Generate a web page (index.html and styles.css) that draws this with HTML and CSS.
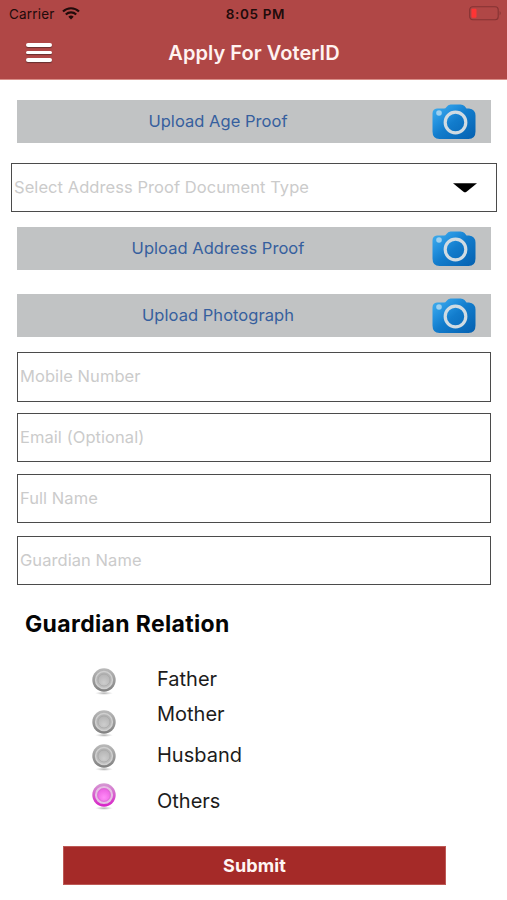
FILE: index.html
```html
<!DOCTYPE html>
<html lang="en">
<head>
<meta charset="utf-8">
<title>Apply For VoterID</title>
<link rel="stylesheet" href="styles.css">
</head>
<body>
<svg class="defs" width="0" height="0" aria-hidden="true">
  <defs>
    <linearGradient id="cam" x1="0" y1="0" x2="1" y2="1">
      <stop offset="0" stop-color="#45b2ef"/><stop offset=".3" stop-color="#2492df"/>
      <stop offset=".5" stop-color="#127ccc"/><stop offset="1" stop-color="#0560b0"/>
    </linearGradient>
    <linearGradient id="grayRim" x1="0" y1="0" x2="0" y2="1">
      <stop offset="0" stop-color="#bababa"/><stop offset="1" stop-color="#808080"/>
    </linearGradient>
    <radialGradient id="grayDot" cy=".65"><stop offset="0" stop-color="#cdcdcd"/><stop offset="1" stop-color="#b4b4b4"/></radialGradient>
    <linearGradient id="pinkRim" x1="0" y1="0" x2="0" y2="1">
      <stop offset="0" stop-color="#d59bd3"/><stop offset="1" stop-color="#d820c7"/>
    </linearGradient>
    <radialGradient id="pinkDot" cy=".65"><stop offset="0" stop-color="#ff8cf7"/><stop offset="1" stop-color="#ee62e4"/></radialGradient>
    <radialGradient id="shade"><stop offset="0" stop-color="#999" stop-opacity=".8"/><stop offset="1" stop-color="#bbb" stop-opacity="0"/></radialGradient>
    <symbol id="camera" viewBox="0 0 44 36">
      <path d="M5 4.500h7q1.500 0 2.500-1.500Q16 .5 18.500.5h10q2.500 0 4 1.500l2 2.500h2.500q6.500 1 6.500 7v16q0 7.500-7 7.500H7.500q-7 0-7-7.500V9.500q0-4.500 4.500-5Z" fill="url(#cam)"/>
      <circle cx="7" cy="9" r="2.800" fill="#9ed0ef"/>
      <circle cx="23.500" cy="18.500" r="10.300" fill="none" stroke="#d0dbe2" stroke-width="3.200"/>
    </symbol>
    <symbol id="off" viewBox="0 0 26 30">
      <ellipse cx="13" cy="26.200" rx="9" ry="1.800" fill="url(#shade)"/>
      <circle cx="13" cy="13" r="11.700" fill="url(#grayRim)"/>
      <circle cx="13" cy="13" r="8.400" fill="url(#grayDot)" stroke="#d0d0d0" stroke-width="1.500"/>
      <circle cx="13" cy="13" r="6" fill="none" stroke="#a5a5a5" stroke-width=".7"/>
    </symbol>
    <symbol id="on" viewBox="0 0 26 30">
      <ellipse cx="13" cy="26.200" rx="9" ry="1.800" fill="url(#shade)"/>
      <circle cx="13" cy="13" r="11.700" fill="url(#pinkRim)"/>
      <circle cx="13" cy="13" r="8" fill="url(#pinkDot)" stroke="#e5c0e3" stroke-width="2.200"/>
      <circle cx="13" cy="13" r="6.300" fill="none" stroke="#cf72c8" stroke-width=".7"/>
    </symbol>
  </defs>
</svg>
<header class="header">
  <div class="status">
    <div class="carrier"><span>Carrier</span>
      <svg width="18" height="13" viewBox="0 0 18 13" fill="none" stroke="#210b0b"><path d="M1 4.500a11.500 11.500 0 0 1 16 0M3.800 7.500a7.500 7.500 0 0 1 10.400 0" stroke-width="2.200"/><path d="M6.300 9.700a3.900 3.900 0 0 1 5.400 0L9 12.500Z" fill="#210b0b" stroke="none"/></svg>
    </div>
    <span class="time">8:05 PM</span>
    <svg class="battery" width="33" height="15" viewBox="0 0 33 15"><rect x=".7" y=".7" width="28.500" height="13" rx="3" fill="none" stroke="#843333" stroke-width="1.100"/><path d="M30.700 5q2 2.200 0 4.400Z" fill="#843333"/><rect x="2.500" y="2.700" width="5" height="9" rx="1" fill="#ff3434"/></svg>
  </div>
  <div class="nav">
    <div class="menu"><i></i><i></i><i></i></div>
    <h1 class="title">Apply For VoterID</h1>
  </div>
</header>
<main class="form">
  <div class="upload age"><span>Upload Age Proof</span><svg class="camera"><use href="#camera"/></svg></div>
  <div class="field select"><span>Select Address Proof Document Type</span><svg width="24" height="10" viewBox="0 0 24 10"><path d="M0 .3h24L13.500 8.800q-1.500 1-3 0Z" fill="#000"/></svg></div>
  <div class="upload address"><span>Upload Address Proof</span><svg class="camera"><use href="#camera"/></svg></div>
  <div class="upload photo"><span>Upload Photograph</span><svg class="camera"><use href="#camera"/></svg></div>
  <div class="field mobile"><span>Mobile Number</span></div>
  <div class="field email"><span>Email (Optional)</span></div>
  <div class="field name"><span>Full Name</span></div>
  <div class="field guardian"><span>Guardian Name</span></div>
  <h2 class="heading">Guardian Relation</h2>
  <div class="relation">
    <div class="radios">
      <svg class="radio"><use href="#off"/></svg>
      <svg class="radio second"><use href="#off"/></svg>
      <svg class="radio third"><use href="#off"/></svg>
      <svg class="radio fourth"><use href="#on"/></svg>
    </div>
    <div class="labels">
      <span class="father">Father</span>
      <span class="mother">Mother</span>
      <span class="husband">Husband</span>
      <span class="others">Others</span>
    </div>
  </div>
  <button class="submit">Submit</button>
</main>
</body>
</html>
```

FILE: styles.css
```css
* { box-sizing: border-box; }
body { margin: 0; width: 507px; height: 900px; overflow: hidden; background: #fff; font-family: Inter, "Liberation Sans", sans-serif; }
.defs { position: absolute; }
.header { height: 80px; background: #b04746; border-bottom: 1px solid #d98f89; }
.status { display: grid; grid-template-columns: 1fr auto 1fr; height: 27px; padding: 0 5px 0 9px; align-items: center; color: #210b0b; font-size: 13.5px; }
.carrier { display: flex; align-items: center; gap: 7px; letter-spacing: .2px; }
.time { font-weight: 600; letter-spacing: .65px; }
.battery { justify-self: end; }
.nav { display: grid; grid-template-columns: 94px 1fr 93px; height: 51px; align-items: center; }
.menu { display: flex; flex-direction: column; gap: 4px; width: 26px; margin-left: 26px; }
.menu i { height: 3.500px; border-radius: 2px; background: #fff; box-shadow: 0 1px 1px #653030; }
.title { margin: 0; text-align: center; color: #fff3f1; font-size: 20px; font-weight: 600; line-height: 24px; letter-spacing: .05px; }
.form { display: flex; flex-direction: column; padding: 21px 16px 0 17px; margin-top: -1px; }
.upload { display: grid; grid-template-columns: 402px 44px; column-gap: 13px; align-items: center; height: 43px; background: #c1c3c4; color: #365f9e; font-size: 16.500px; text-align: center; }
.upload span { padding-bottom: 1px; letter-spacing: .04px; }
.camera { width: 44px; height: 36px; }
.field { display: flex; align-items: center; height: 49px; padding: 0 2px; border: 1px solid #4b4b4b; color: #cbcbcb; font-size: 16.500px; letter-spacing: .06px; }
.field span { padding-bottom: 2px; }
.select { justify-content: space-between; margin: 20px -6px 15px; padding: 0 19px 0 2px; }
.photo { margin-top: 24px; }
.mobile { height: 50px; margin-top: 15px; }
.email { margin-top: 11px; }
.name { margin-top: 12px; }
.guardian { margin-top: 13px; }
.heading { margin: 24px 0 0 8px; font-size: 23px; line-height: 30px; font-weight: 700; letter-spacing: .35px; color: #050505; }
.relation { display: flex; gap: 40px; padding: 28px 0 0 74px; height: 180px; }
.radios, .labels { display: flex; flex-direction: column; }
.radio { width: 26px; height: 30px; }
.second { margin-top: 12px; }
.third { margin-top: 4px; }
.fourth { margin-top: 9px; }
.labels { font-size: 20px; line-height: 26px; color: #1c1c1c; }
.father { margin-top: -1px; }
.mother { margin-top: 9px; }
.husband { margin-top: 15px; }
.others { margin-top: 20px; }
.submit { width: 383px; height: 39px; margin: 27px 0 0 46px; padding: 0; border: 1px solid #bd5955; background: #a52a28; color: #fff5f3; font: 700 18px Inter, sans-serif; letter-spacing: .1px; }
```
